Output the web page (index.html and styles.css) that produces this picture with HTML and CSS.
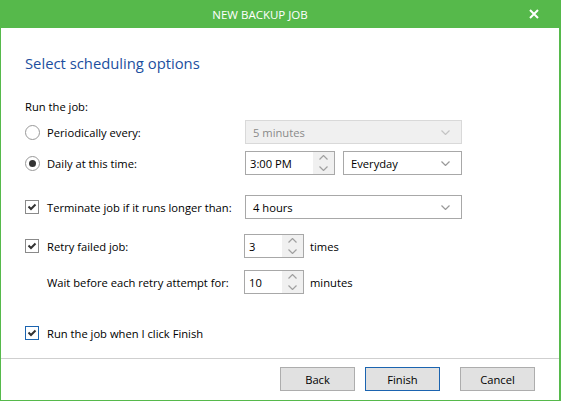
FILE: index.html
```html
<!DOCTYPE html>
<html>
<head>
<meta charset="utf-8">
<link rel="stylesheet" href="styles.css">
</head>
<body>
<div class="window">
  <div class="titlebar">
    <span class="title">NEW BACKUP JOB</span>
    <svg class="close" width="10" height="10" viewBox="0 0 10 10"><path d="M1 1 L9 9 M9 1 L1 9" stroke="#fff" stroke-width="2"/></svg>
  </div>
  <div class="content">
    <h1 class="heading">Select scheduling options</h1>
    <div class="label-line">Run the job:</div>

    <div class="row r-periodic">
      <div class="lbl"><span class="radio"></span><span>Periodically every:</span></div>
      <div class="select disabled w-full"><span>5 minutes</span><svg class="chev" width="9" height="5" viewBox="0 0 9 5"><path d="M0.5 0.5 L4.5 4.5 L8.5 0.5" fill="none" stroke="#c4c4c4" stroke-width="1.2"/></svg></div>
    </div>

    <div class="row r-daily">
      <div class="lbl"><span class="radio checked"></span><span>Daily at this time:</span></div>
      <div class="spin w-time"><span class="val">3:00 PM</span><span class="arrows"><svg width="9" height="5" viewBox="0 0 9 5"><path d="M0.5 4.5 L4.5 0.5 L8.5 4.5" fill="none" stroke="#a0a0a0" stroke-width="1.2"/></svg><svg width="9" height="5" viewBox="0 0 9 5"><path d="M0.5 0.5 L4.5 4.5 L8.5 0.5" fill="none" stroke="#a0a0a0" stroke-width="1.2"/></svg></span></div>
      <div class="select w-every"><span>Everyday</span><svg class="chev" width="9" height="5" viewBox="0 0 9 5"><path d="M0.5 0.5 L4.5 4.5 L8.5 0.5" fill="none" stroke="#999" stroke-width="1.2"/></svg></div>
    </div>

    <div class="row r-term">
      <div class="lbl"><span class="check"><svg width="12" height="12" viewBox="0 0 12 12"><path d="M2.5 5.5 L5 8 L9.5 3.5" fill="none" stroke="#333" stroke-width="2"/></svg></span><span>Terminate job if it runs longer than:</span></div>
      <div class="select w-full"><span>4 hours</span><svg class="chev" width="9" height="5" viewBox="0 0 9 5"><path d="M0.5 0.5 L4.5 4.5 L8.5 0.5" fill="none" stroke="#999" stroke-width="1.2"/></svg></div>
    </div>

    <div class="row r-retry">
      <div class="lbl"><span class="check"><svg width="12" height="12" viewBox="0 0 12 12"><path d="M2.5 5.5 L5 8 L9.5 3.5" fill="none" stroke="#333" stroke-width="2"/></svg></span><span>Retry failed job:</span></div>
      <div class="spin w-num"><span class="val">3</span><span class="arrows"><svg width="9" height="5" viewBox="0 0 9 5"><path d="M0.5 4.5 L4.5 0.5 L8.5 4.5" fill="none" stroke="#a0a0a0" stroke-width="1.2"/></svg><svg width="9" height="5" viewBox="0 0 9 5"><path d="M0.5 0.5 L4.5 4.5 L8.5 0.5" fill="none" stroke="#a0a0a0" stroke-width="1.2"/></svg></span></div>
      <span class="unit">times</span>
    </div>

    <div class="row r-wait">
      <div class="lbl indent"><span>Wait before each retry attempt for:</span></div>
      <div class="spin w-num"><span class="val">10</span><span class="arrows"><svg width="9" height="5" viewBox="0 0 9 5"><path d="M0.5 4.5 L4.5 0.5 L8.5 4.5" fill="none" stroke="#a0a0a0" stroke-width="1.2"/></svg><svg width="9" height="5" viewBox="0 0 9 5"><path d="M0.5 0.5 L4.5 4.5 L8.5 0.5" fill="none" stroke="#a0a0a0" stroke-width="1.2"/></svg></span></div>
      <span class="unit">minutes</span>
    </div>

    <div class="row r-finish">
      <div class="lbl"><span class="check focus"><svg width="12" height="12" viewBox="0 0 12 12"><path d="M2.5 5.5 L5 8 L9.5 3.5" fill="none" stroke="#333" stroke-width="2"/></svg></span><span>Run the job when I click Finish</span></div>
    </div>
  </div>
  <div class="footer">
    <button class="btn">Back</button>
    <button class="btn primary">Finish</button>
    <button class="btn cancel">Cancel</button>
  </div>
</div>
</body>
</html>
```
FILE: styles.css
```css
* { box-sizing: border-box; }
html, body { margin: 0; padding: 0; background: #fff; }
body {
  font-family: "Open Sans", "Noto Sans", sans-serif;
  font-size: 11.2px;
  color: #000;
}
.window {
  width: 561px;
  height: 401px;
  border-left: 1px solid #56b94b;
  border-right: 2px solid #56b94b;
  border-bottom: 1px solid #56b94b;
  display: flex;
  flex-direction: column;
}
.titlebar {
  height: 28px;
  background: #56b94b;
  margin-left: -1px;
  margin-right: -2px;
  display: flex;
  align-items: center;
  justify-content: center;
  padding-right: 41px;
  position: relative;
}
.title { color: #fff; font-size: 11.5px; }
.close { position: absolute; left: 529px; top: 9px; }
.content {
  flex: 1;
  padding-left: 24px;
}
.heading {
  margin: 25px 0 0 0;
  font-size: 14.8px;
  font-weight: normal;
  line-height: 20px;
  color: #1c4fa0;
}
.label-line { margin-top: 24px; line-height: 20px; }
.row { display: flex; align-items: center; height: 24px; }
.r-periodic { margin-top: 3px; }
.r-daily { margin-top: 7px; }
.r-term { margin-top: 20px; }
.r-retry { margin-top: 15px; }
.r-wait { margin-top: 12px; }
.r-finish { margin-top: 27px; }
.lbl { width: 220px; display: flex; align-items: center; gap: 7px; }
.lbl.indent { padding-left: 22px; }
.radio {
  width: 15px; height: 15px;
  border: 1px solid #999;
  border-radius: 50%;
  display: flex; align-items: center; justify-content: center;
  flex: none;
}
.radio.checked::after {
  content: "";
  width: 7px; height: 7px;
  border-radius: 50%;
  background: #333;
}
.check {
  width: 14px; height: 14px;
  border: 1px solid #8a8a8a;
  display: flex; align-items: center; justify-content: center;
  flex: none;
  margin-right: 1px;
}
.check.focus { border-color: #1b64b0; }
.select {
  height: 24px;
  border: 1px solid #a8a8a8;
  display: flex; align-items: center; justify-content: space-between;
  padding: 0 11px 0 7px;
  background: #fff;
}
.select.disabled { background: #f0f0f0; border-color: #d9d9d9; color: #8a8a8a; }
.w-full { width: 217px; }
.w-every { width: 119px; margin-left: 8px; }
.spin {
  height: 24px;
  border: 1px solid #a8a8a8;
  display: flex;
  background: #fff;
}
.spin .val { flex: 1; display: flex; align-items: center; padding-left: 4px; }
.spin .arrows {
  width: 21px;
  display: flex; flex-direction: column;
  background: #f0f0f0;
}
.spin .arrows svg { flex: 1; display: block; margin: 0 auto; padding: 3px 0; width: 9px; height: 11px; }
.w-time { width: 90px; }
.w-num { width: 60px; margin-left: -1px; }
.unit { margin-left: 6px; }
.footer {
  height: 42px;
  border-top: 1px solid #cfcfcf;
  display: flex;
  justify-content: flex-end;
  align-items: flex-start;
  padding: 8px 24px 0 0;
  gap: 10px;
}
.btn {
  width: 75px; height: 24px;
  border: 1px solid #adadad;
  background: #e1e1e1;
  font-family: inherit;
  font-size: 11.2px;
  color: #000;
  padding: 0;
}
.btn.primary { border-color: #1b64b0; }
.btn.cancel { margin-left: 10px; }
```
